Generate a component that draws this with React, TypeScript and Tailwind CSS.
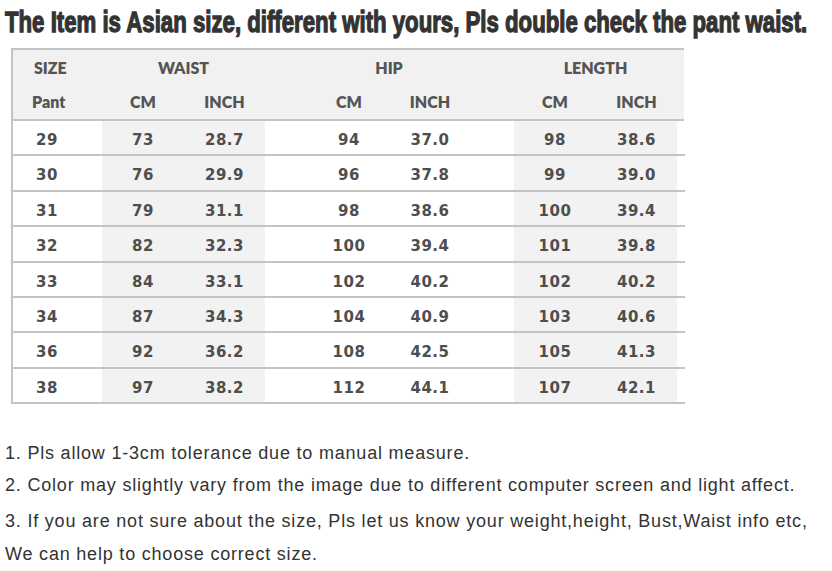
import React from "react";

const rows: string[][] = [
  ["29", "73", "28.7", "94", "37.0", "98", "38.6"],
  ["30", "76", "29.9", "96", "37.8", "99", "39.0"],
  ["31", "79", "31.1", "98", "38.6", "100", "39.4"],
  ["32", "82", "32.3", "100", "39.4", "101", "39.8"],
  ["33", "84", "33.1", "102", "40.2", "102", "40.2"],
  ["34", "87", "34.3", "104", "40.9", "103", "40.6"],
  ["36", "92", "36.2", "108", "42.5", "105", "41.3"],
  ["38", "97", "38.2", "112", "44.1", "107", "42.1"],
];

const cols = "grid grid-cols-[89px_82px_81px_43px_82px_80px_44px_82px_81px_10px]";
const head = "font-['Lato',sans-serif] font-extrabold text-[16px] text-[#555] flex items-center";
const num = "font-['DejaVu_Sans',sans-serif] font-bold text-[15px] tracking-[0.5px] text-[#4e4e4e] flex items-center justify-center pt-[5px]";

export default function App() {
  return (
    <div className="w-[832px] h-[571px] bg-white overflow-hidden">
      <div className="h-[48px] pl-[5px] pt-[2px]">
        <div className="origin-left [transform:scaleX(0.74)] whitespace-nowrap font-['Liberation_Sans',sans-serif] font-bold text-[30px] leading-[40px] text-[#333] [-webkit-text-stroke:1.3px_#333]">
          The Item is Asian size, different with yours, Pls double check the pant waist.
        </div>
      </div>
      <div className="ml-[11px] w-[674px] border-l-2 border-[#c4c4c4]">
        <div className="bg-[#f1f1f1] border-t-2 border-b-2 border-[#c4c4c4] mr-[1px]">
          <div className={`${cols} h-[35px]`}>
            <div className={`${head} pl-[21px] col-span-1`}>SIZE</div>
            <div className={`${head} col-span-2 justify-center`}>WAIST</div>
            <div />
            <div className={`${head} col-span-2 justify-center`}>HIP</div>
            <div />
            <div className={`${head} col-span-2 justify-center`}>LENGTH</div>
            <div />
          </div>
          <div className={`${cols} h-[34px]`}>
            <div className={`${head} pl-[19px]`}>Pant</div>
            <div className={`${head} justify-center`}>CM</div>
            <div className={`${head} justify-center`}>INCH</div>
            <div />
            <div className={`${head} justify-center`}>CM</div>
            <div className={`${head} justify-center`}>INCH</div>
            <div />
            <div className={`${head} justify-center`}>CM</div>
            <div className={`${head} justify-center`}>INCH</div>
            <div />
          </div>
        </div>
        {rows.map((r, i) => (
          <div key={i} className={`${cols} h-[35.4px] border-b-2 border-[#c4c4c4]`}>
            <div className={`${num} !justify-start pl-[23px]`}>{r[0]}</div>
            <div className={`${num} bg-[#f2f2f2]`}>{r[1]}</div>
            <div className={`${num} bg-[#f2f2f2]`}>{r[2]}</div>
            <div />
            <div className={num}>{r[3]}</div>
            <div className={num}>{r[4]}</div>
            <div />
            <div className={`${num} bg-[#f2f2f2]`}>{r[5]}</div>
            <div className={`${num} bg-[#f2f2f2]`}>{r[6]}</div>
            <div />
          </div>
        ))}
      </div>
      <div className="pt-[33px] pl-[5px] font-['Liberation_Sans',sans-serif] text-[18px] tracking-[0.8px] text-[#333]">
        <div className="h-[32px] leading-[32px]">1. Pls allow 1-3cm tolerance due to manual measure.</div>
        <div className="h-[36px] leading-[32px]">2. Color may slightly vary from the image due to different computer screen and light affect.</div>
        <div className="h-[33px] leading-[32px]">3. If you are not sure about the size, Pls let us know your weight,height, Bust,Waist info etc,</div>
        <div className="h-[33px] leading-[32px]">We can help to choose correct size.</div>
      </div>
    </div>
  );
}
